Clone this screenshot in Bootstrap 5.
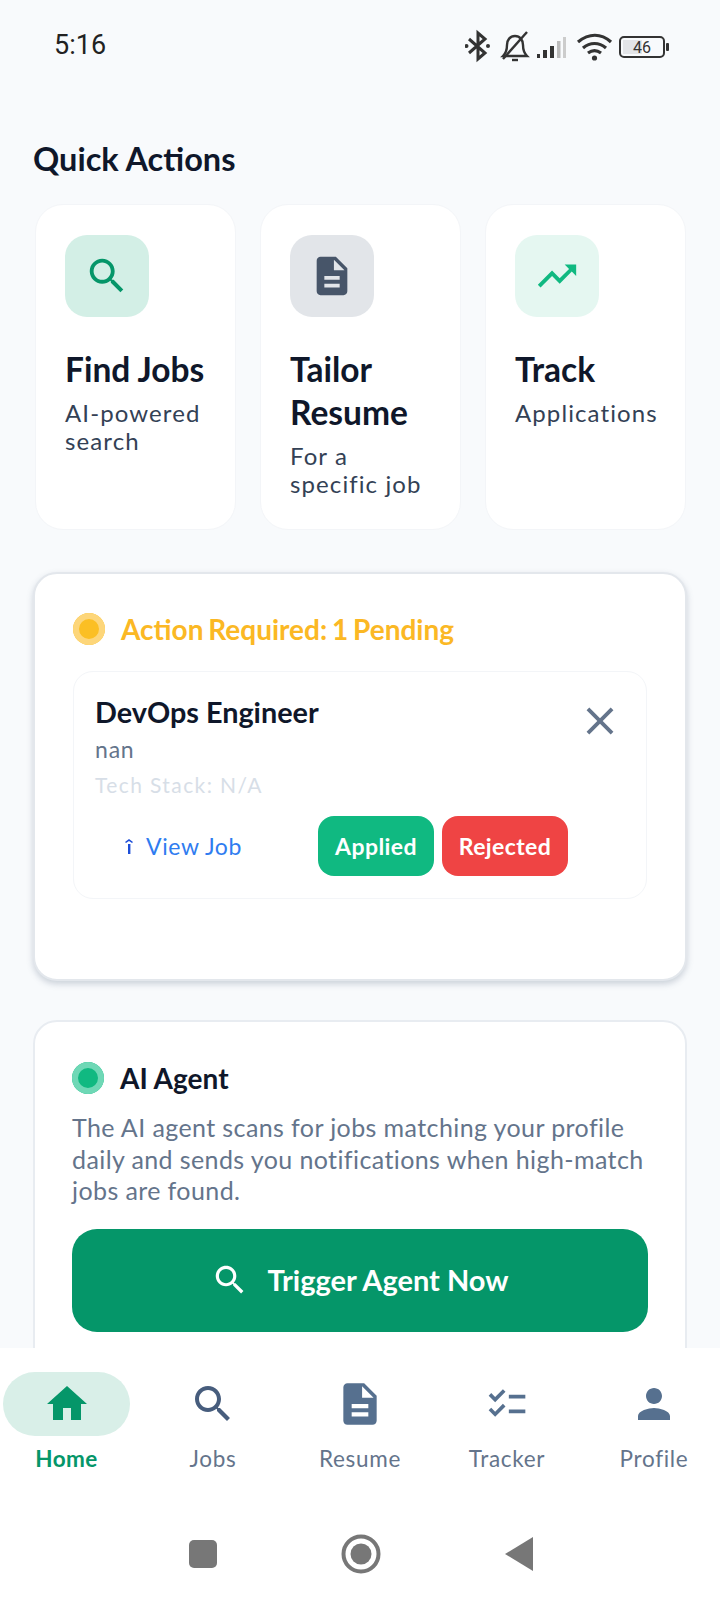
<!DOCTYPE html>
<html lang="en">
<head>
  <meta charset="UTF-8">
  <meta name="viewport" content="width=device-width, initial-scale=1">
  <title>Dashboard</title>
  <link href="https://cdn.jsdelivr.net/npm/bootstrap@5.3.3/dist/css/bootstrap.min.css" rel="stylesheet">
  <style>
    html, body { height: 100%; }
    body {
      background: #f8fafc;
      font-family: "Lato", "Liberation Sans", sans-serif;
      color: #0f172a;
    }
    .app-shell { width: 720px; height: 1600px; overflow: hidden; }
    .status-bar { height: 92px; padding: 4px 51px 0 54px; }
    .status-time { font-family: "Roboto", sans-serif; font-size: 27px; color: #222; }
    .app-main { min-height: 0; overflow: hidden; padding: 0 33px; }
    .section-title { font-size: 32.5px; font-weight: 700; line-height: 40px; margin: 52px 0 25px; }
    .qa-row { gap: 24px; margin-left: 2px; }
    .qa-card {
      width: 201px; height: 326px; padding: 30px 10px 0 29px; flex: none;
      border: 1px solid #f3f5f8; border-radius: 28px; background: #fff;
    }
    .qa-tile { width: 84px; height: 82px; border-radius: 22px; }
    .qa-title { font-size: 33.5px; font-weight: 700; line-height: 43px; margin: 31px 0 0; }
    .qa-sub { font-size: 24px; line-height: 28px; margin: 8px 0 0; color: #334155; letter-spacing: 1.1px; }
    .panel-card { border-radius: 24px; border: 2px solid #e8ecf1; background: #fff; }
    .pending-panel { height: 409px; margin-top: 42px; padding: 37px 38px 0; box-shadow: 0 3px 6px rgba(100, 116, 139, .3); border-color: #e3e7ec; }
    .agent-panel { margin-top: 39px; padding: 38px 37px 0; height: 400px; }
    .pulse-dot { width: 32px; height: 32px; border-radius: 50%; flex: none; }
    .pulse-amber { background: #fbbf24; box-shadow: inset 0 0 0 6px #fdd67a; }
    .pulse-green { background: #10b981; box-shadow: inset 0 0 0 6px #6fd8b6; }
    .panel-title { font-size: 28px; font-weight: 700; line-height: 36px; margin: 0; }
    .amber-text { color: #fbb824; word-spacing: -2px; }
    .job-card { margin-top: 24px; height: 228px; border: 1px solid #f3f5f8; border-radius: 20px; padding: 21px 21px 0; }
    .job-title { font-size: 28.8px; font-weight: 700; line-height: 38px; margin: 0; }
    .job-company { font-size: 23px; line-height: 36px; color: #64748b; letter-spacing: .8px; }
    .job-stack { font-size: 21px; line-height: 36px; color: #d7dee7; letter-spacing: 1.4px; }
    .job-close { color: #64748b; margin: 5px 2px 0 0; }
    .job-actions { margin-top: 13px; }
    .view-link { width: 223px; padding-left: 30px; font-size: 23px; color: #2f7cf0; text-decoration: none; letter-spacing: .6px; }
    .view-link svg { margin-right: 13px; }
    .act-btn { height: 60px; border-radius: 16px; border: 0; color: #fff; font-size: 23px; font-weight: 700; padding: 0; letter-spacing: .4px; }
    .act-applied { width: 116px; background: #10b981; }
    .act-rejected { width: 126px; background: #ef4444; margin-left: 8px; }
    .agent-copy { font-size: 25px; line-height: 31.5px; color: #64748b; margin: 16px 0 22px; letter-spacing: .4px; }
    .trigger-btn {
      width: 576px; height: 103px; border-radius: 25px; border: 0; color: #fff;
      background: #059669; font-size: 29px; font-weight: 700; gap: 18px;
    }
    .bottom-nav { height: 252px; background: #fff; flex: none; padding-top: 24px; }
    .nav-row { padding: 0 0 0 3px; }
    .tab-item { width: 147px; flex: none; font-size: 22.5px; color: #64748b; letter-spacing: .7px; text-decoration: none; line-height: 30px; }
    .tab-item:first-child { width: 127px; margin-right: 9.5px; }
    .tab-icon { height: 64px; width: 100%; border-radius: 32px; margin-bottom: 8px; }
    .tab-active { color: #059669; font-weight: 700; letter-spacing: .4px; }
    .tab-active .tab-icon { background: #d9efe8; }
    .sys-nav { margin-top: 60px; gap: 120px; padding-left: 2px; }
  </style>
</head>
<body>
  <div class="app-shell d-flex flex-column">
    <div class="status-bar d-flex align-items-center justify-content-between">
      <span class="status-time">5:16</span>
      <svg width="204" height="34" viewBox="0 0 204 34" fill="none">
        <path d="M4 10l16 14-7 6V4l7 6L4 24" stroke="#333" stroke-width="3"/>
        <circle cx="1.500" cy="17" r="2" fill="#333"/>
        <circle cx="23" cy="17" r="2" fill="#333"/>
        <g stroke="#333" stroke-width="2.400" fill="none">
          <path d="M38 27c3-3 4-6 4-11 0-5 3-9 8-9s8 4 8 9c0 5 1 8 4 11z"/>
          <path d="M38 30L62 3"/>
          <path d="M47 31h6"/>
        </g>
        <g fill="#333">
          <rect x="72" y="25" width="3" height="4"/>
          <rect x="78" y="21" width="4" height="8"/>
          <rect x="85" y="17" width="4" height="12"/>
          <rect x="92" y="12" width="3.500" height="17" fill="#bbb"/>
          <rect x="98" y="8" width="3" height="21" fill="#ccc"/>
        </g>
        <g stroke="#333" stroke-width="3.200" fill="none">
          <path d="M113 13c11-9 23-9 33 0"/>
          <path d="M118 19c7-6 16-6 23 0"/>
          <path d="M123 24c4-3 9-3 13 0"/>
        </g>
        <circle cx="129.500" cy="29" r="2.600" fill="#333"/>
        <rect x="155" y="8" width="44" height="20" rx="4" stroke="#333" stroke-width="2"/>
        <rect x="158" y="11" width="19" height="14" fill="#e3e5e8"/>
        <rect x="201" y="14" width="3" height="8" rx="1" fill="#333"/>
        <text x="177" y="24" text-anchor="middle" font-family="Roboto, sans-serif" font-size="16" fill="#333">46</text>
      </svg>
    </div>

    <main class="app-main flex-grow-1">
      <h2 class="section-title">Quick Actions</h2>
      <div class="d-flex qa-row">
        <div class="qa-card">
          <div class="qa-tile d-flex align-items-center justify-content-center" style="background:#d3efe6">
            <svg width="46" height="46" viewBox="0 0 24 24" fill="#059669"><path d="M15.5 14h-.79l-.28-.27C15.41 12.59 16 11.11 16 9.5 16 5.91 13.09 3 9.5 3S3 5.91 3 9.5 5.910 16 9.500 16c1.610 0 3.090-.59 4.230-1.570l.27.28v.79l5 4.990L20.490 19l-4.990-5zm-6 0C7.010 14 5 11.990 5 9.500S7.010 5 9.500 5 14 7.010 14 9.500 11.990 14 9.500 14z"/></svg>
          </div>
          <h3 class="qa-title">Find Jobs</h3>
          <p class="qa-sub">AI-powered search</p>
        </div>
        <div class="qa-card">
          <div class="qa-tile d-flex align-items-center justify-content-center" style="background:#e2e5e9">
            <svg width="46" height="46" viewBox="0 0 24 24" fill="#475569"><path d="M14 2H6c-1.100 0-1.990.9-1.990 2L4 20c0 1.100.89 2 1.990 2H18c1.100 0 2-.9 2-2V8l-6-6zm2 16H8v-2h8v2zm0-4H8v-2h8v2zm-3-5V3.500L18.500 9H13z"/></svg>
          </div>
          <h3 class="qa-title">Tailor Resume</h3>
          <p class="qa-sub">For a<br>specific job</p>
        </div>
        <div class="qa-card">
          <div class="qa-tile d-flex align-items-center justify-content-center" style="background:#e5f7f1">
            <svg width="46" height="46" viewBox="0 0 24 24" fill="#10b981"><path d="M16 6l2.290 2.290-4.880 4.880-4-4L2 16.590 3.410 18l6-6 4 4 6.300-6.290L22 12V6z"/></svg>
          </div>
          <h3 class="qa-title">Track</h3>
          <p class="qa-sub">Applications</p>
        </div>
      </div>

      <section class="panel-card pending-panel">
        <div class="d-flex align-items-center gap-3">
          <span class="pulse-dot pulse-amber"></span>
          <h3 class="panel-title amber-text">Action Required: 1 Pending</h3>
        </div>
        <div class="job-card">
          <div class="d-flex justify-content-between align-items-start">
            <div>
              <h4 class="job-title">DevOps Engineer</h4>
              <div class="job-company">nan</div>
              <div class="job-stack">Tech Stack: N/A</div>
            </div>
            <svg class="job-close" width="46" height="46" viewBox="0 0 24 24" fill="currentColor"><path d="M19 6.410L17.590 5 12 10.590 6.410 5 5 6.410 10.590 12 5 17.590 6.410 19 12 13.410 17.590 19 19 17.590 13.410 12z"/></svg>
          </div>
          <div class="job-actions d-flex align-items-center">
            <a class="view-link d-flex align-items-center" href="#">
              <svg width="8" height="15" viewBox="0 0 8 15" fill="#1d4ed8"><rect x="3" y="5" width="2.400" height="10"/><path d="M0 3l4-3 4 3-1 1-3-2-3 2z"/></svg>
              View Job
            </a>
            <button class="btn act-btn act-applied" type="button">Applied</button>
            <button class="btn act-btn act-rejected" type="button">Rejected</button>
          </div>
        </div>
      </section>

      <section class="panel-card agent-panel">
        <div class="d-flex align-items-center gap-3">
          <span class="pulse-dot pulse-green"></span>
          <h3 class="panel-title">AI Agent</h3>
        </div>
        <p class="agent-copy">The AI agent scans for jobs matching your profile daily and sends you notifications when high-match jobs are found.</p>
        <button class="btn trigger-btn d-flex align-items-center justify-content-center" type="button">
          <svg width="38" height="38" viewBox="0 0 24 24" fill="#fff"><path d="M15.500 14h-.79l-.28-.27C15.410 12.590 16 11.110 16 9.500 16 5.910 13.090 3 9.500 3S3 5.910 3 9.500 5.910 16 9.500 16c1.610 0 3.090-.59 4.230-1.570l.27.28v.79l5 4.990L20.490 19l-4.990-5zm-6 0C7.010 14 5 11.990 5 9.500S7.010 5 9.500 5 14 7.010 14 9.500 11.990 14 9.500 14z"/></svg>
          Trigger Agent Now
        </button>
      </section>
    </main>

    <nav class="bottom-nav">
      <div class="nav-row d-flex">
        <a class="tab-item tab-active d-flex flex-column align-items-center" href="#">
          <span class="tab-icon d-flex align-items-center justify-content-center">
            <svg width="48" height="48" viewBox="0 0 24 24" fill="#059669"><path d="M10 20v-6h4v6h5v-8h3L12 3 2 12h3v8z"/></svg>
          </span>Home
        </a>
        <a class="tab-item d-flex flex-column align-items-center" href="#">
          <span class="tab-icon d-flex align-items-center justify-content-center">
            <svg width="48" height="48" viewBox="0 0 24 24" fill="#475d7d"><path d="M15.500 14h-.79l-.28-.27C15.410 12.590 16 11.110 16 9.500 16 5.910 13.090 3 9.500 3S3 5.910 3 9.500 5.910 16 9.500 16c1.610 0 3.090-.59 4.230-1.570l.27.28v.79l5 4.990L20.490 19l-4.990-5zm-6 0C7.010 14 5 11.990 5 9.500S7.010 5 9.500 5 14 7.010 14 9.500 11.990 14 9.500 14z"/></svg>
          </span>Jobs
        </a>
        <a class="tab-item d-flex flex-column align-items-center" href="#">
          <span class="tab-icon d-flex align-items-center justify-content-center">
            <svg width="50" height="50" viewBox="0 0 24 24" fill="#56708f"><path d="M14 2H6c-1.100 0-1.990.9-1.990 2L4 20c0 1.100.89 2 1.990 2H18c1.100 0 2-.9 2-2V8l-6-6zm2 16H8v-2h8v2zm0-4H8v-2h8v2zm-3-5V3.500L18.500 9H13z"/></svg>
          </span>Resume
        </a>
        <a class="tab-item d-flex flex-column align-items-center" href="#">
          <span class="tab-icon d-flex align-items-center justify-content-center">
            <svg width="44" height="44" viewBox="0 0 24 24" fill="#56708f"><path d="M22 7h-9v2h9V7zm0 8h-9v2h9v-2zM5.540 11L2 7.460l1.410-1.410 2.120 2.120 4.240-4.240 1.410 1.410L5.540 11zm0 8L2 15.460l1.410-1.410 2.120 2.120 4.240-4.240 1.410 1.410L5.540 19z"/></svg>
          </span>Tracker
        </a>
        <a class="tab-item d-flex flex-column align-items-center" href="#">
          <span class="tab-icon d-flex align-items-center justify-content-center">
            <svg width="48" height="48" viewBox="0 0 24 24" fill="#56708f"><path d="M12 12c2.210 0 4-1.790 4-4s-1.790-4-4-4-4 1.790-4 4 1.790 4 4 4zm0 2c-2.670 0-8 1.340-8 4v2h16v-2c0-2.660-5.330-4-8-4z"/></svg>
          </span>Profile
        </a>
      </div>
      <div class="sys-nav d-flex justify-content-center align-items-center">
        <svg width="36" height="36" viewBox="0 0 36 36" fill="#777"><rect x="4" y="4" width="28" height="28" rx="5"/></svg>
        <svg width="40" height="40" viewBox="0 0 40 40"><circle cx="20" cy="20" r="17.500" fill="none" stroke="#777" stroke-width="4"/><circle cx="20" cy="20" r="10.500" fill="#777"/></svg>
        <svg width="36" height="40" viewBox="0 0 36 40" fill="#777"><path d="M4 20L32 3v34z"/></svg>
      </div>
    </nav>
  </div>
  <script src="https://cdn.jsdelivr.net/npm/bootstrap@5.3.3/dist/js/bootstrap.bundle.min.js"></script>
</body>
</html>
